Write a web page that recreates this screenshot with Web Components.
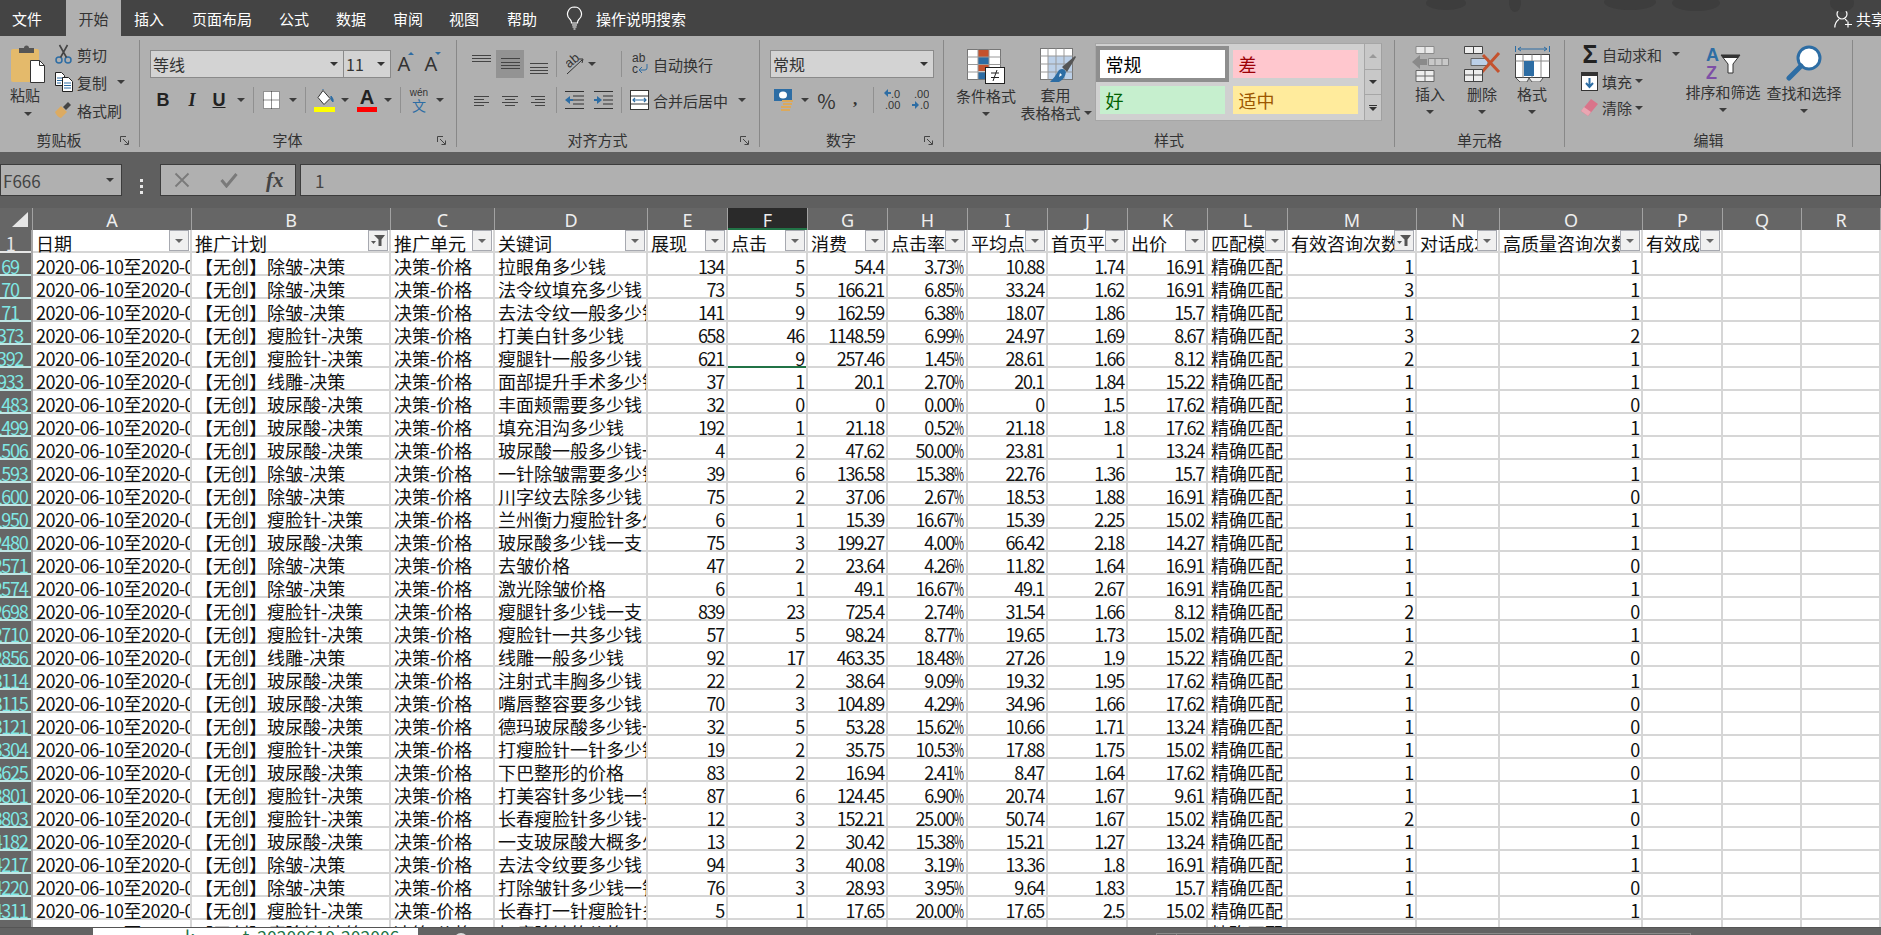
<!DOCTYPE html>
<html lang="zh"><head><meta charset="utf-8"><title>Excel</title>
<style>
html,body{margin:0;padding:0;width:1881px;height:935px;overflow:hidden;background:#5f5f5f;font-family:"Noto Sans CJK SC","Noto Sans",sans-serif}
</style></head><body><x-app></x-app>
<script>
const FF='"Noto Sans CJK SC","Noto Sans",sans-serif';
const blue='#2d6da4';
const L=(w,h,rows,c='#444')=>`<svg width="${w}" height="${h}" viewBox="0 0 ${w} ${h}"><path d="${rows.map(r=>`M${r[0]} ${r[2]}H${r[1]}`).join('')}" stroke="${c}" fill="none"/></svg>`;
const ICONS={
paste:`<svg width="34" height="39" viewBox="0 0 34 39"><rect y="5" width="28" height="33" rx="2" fill="#e4ba6b"/><path d="M8 9V4h5a2.500 2.500 0 0 1 5 0h5v5z" fill="#555"/><path d="M19.500 16.500h9l5 5v17h-14z" fill="#fff" stroke="#333"/><path d="M28.500 16.500v5h5" fill="none" stroke="#333"/></svg>`,
cut:`<svg width="17" height="20" viewBox="0 0 17 20"><circle cx="4" cy="16" r="3" fill="none" stroke="${blue}" stroke-width="1.5"/><circle cx="13" cy="16" r="3" fill="none" stroke="${blue}" stroke-width="1.5"/><path d="M5.500 13.500 12.500 1M11.500 13.500 4.500 1" stroke="#444" stroke-width="1.6" fill="none"/></svg>`,
copy:`<svg width="18" height="20" viewBox="0 0 18 20"><path d="M.5.5h6l3 3v10H.5z" fill="#fff" stroke="#222"/><path d="M2 6h6M2 8.500h6M2 11h4" stroke="${blue}"/><path d="M7.500 5.500h6l4 4v10h-10z" fill="#fff" stroke="#222"/><path d="M9 11h7M9 13.500h7M9 16h7" stroke="${blue}"/></svg>`,
brush:`<svg width="17" height="17" viewBox="0 0 17 17"><path d="M0 10 6 4l6 6-6 6Q2 15 0 10z" fill="#dcab62"/><path d="M8 5l5-5 3 3-5 5z" fill="#444"/></svg>`,
border:`<svg width="17" height="18" viewBox="0 0 17 18"><rect width="17" height="18" fill="#fff"/><path d="M.5.500h16v17H.5zM8.500.500v17M.5 9h16" fill="none" stroke="#222" stroke-dasharray="1 1"/></svg>`,
fill:`<svg width="21" height="23" viewBox="0 0 21 23"><path d="M9 1.500l7 8-6 6-6-7z" fill="#fff" stroke="#333"/><path d="M9 1V0M17 7q3 3 2 6-3-2-2-6z" stroke="${blue}" fill="${blue}"/><rect y="18" width="21" height="5" fill="#ff0"/></svg>`,
topa:L(19,28,[[0,19,5.5],[0,19,8.5],[0,19,11.5]]),
mida:L(19,28,[[0,19,8.5],[0,19,12.5],[0,19,15.5],[0,19,18.5]]),
bota:L(18,28,[[0,18,13.5],[0,18,17.5],[0,18,20.5],[0,18,23.5]]),
lefta:L(15,28,[[0,15,10.5],[0,10,13.5],[0,15,16.5],[0,10,19.5]]),
cena:L(16,28,[[0,16,10.5],[3,13,13.5],[0,16,16.5],[3,13,19.5]]),
riga:L(14,28,[[0,14,10.5],[4,14,13.5],[0,14,16.5],[4,14,19.5]]),
orient:`<svg width="18" height="22" viewBox="0 0 18 22"><text x="0" y="13" font-size="13" font-family="Liberation Sans" fill="#333" transform="rotate(-40 5 10)">ab</text><path d="M1 21 16 7M13 6l4 0-1 4" stroke="#333" fill="none"/></svg>`,
wrap:`<svg width="17" height="24" viewBox="0 0 17 24"><text x="0" y="10" font-size="12" font-family="Liberation Sans" fill="#333">ab</text><text x="0" y="21" font-size="12" font-family="Liberation Sans" fill="#333">c</text><path d="M15 12v4q0 2-2 2H8M10 15l-3 3 3 3" stroke="${blue}" fill="none"/></svg>`,
outd:`<svg width="19" height="18" viewBox="0 0 19 18"><path d="M0 .500h19M8 5h11M8 9h11M8 13h11M0 17.500h19" stroke="#333"/><path d="M0 9l5-4v3h3v2H5v3z" fill="${blue}"/></svg>`,
ind:`<svg width="19" height="18" viewBox="0 0 19 18"><path d="M0 .500h19M9 5h10M9 9h10M9 13h10M0 17.500h19" stroke="#333"/><path d="M8 9 3 5v3H0v2h3v3z" fill="${blue}"/></svg>`,
merge:`<svg width="19" height="20" viewBox="0 0 19 20"><rect x=".5" y=".5" width="18" height="19" fill="#fff" stroke="#333"/><path d="M.5 6h18M.5 14h18" stroke="#333"/><path d="M3 10h13M5 8l-2 2 2 2M14 8l2 2-2 2" stroke="${blue}" fill="none" stroke-width="1.2"/></svg>`,
acct:`<svg width="20" height="23" viewBox="0 0 20 23"><rect width="18" height="12" fill="${blue}"/><ellipse cx="9" cy="6" rx="4" ry="3.500" fill="#fff"/><path d="M8 12h11M9 15h9M7 18h10M7 21h9" stroke="#dba95c" stroke-width="2.200"/></svg>`,
inc:`<svg width="17" height="24" viewBox="0 0 17 24"><path d="M0 5l4-4v3h3v2H4v3z" fill="${blue}"/><text x="7" y="10" font-size="11" font-family="Liberation Sans" fill="#333">.0</text><text x="1" y="21" font-size="11" font-family="Liberation Sans" fill="#333">.00</text></svg>`,
dec:`<svg width="17" height="24" viewBox="0 0 17 24"><text x="2" y="10" font-size="11" font-family="Liberation Sans" fill="#333">.00</text><path d="M7 17l-4-4v3H0v2h3v3z" fill="${blue}"/><text x="8" y="21" font-size="11" font-family="Liberation Sans" fill="#333">.0</text></svg>`,
cf:`<svg width="38" height="35" viewBox="0 0 38 35"><rect x=".5" y=".5" width="33" height="30" fill="#fff" stroke="#777"/><rect x="11" y="1" width="11" height="7" fill="#c4522e"/><rect x="11" y="8" width="11" height="7" fill="${blue}"/><rect x="11" y="15" width="11" height="7" fill="#c4522e"/><rect x="11" y="23" width="11" height="7" fill="${blue}"/><path d="M11 .500v30M22 .500v30M.5 8h33M.5 15.500h33M.5 23h33" stroke="#999" fill="none"/><rect x="18.500" y="18.500" width="19" height="16" fill="#fff" stroke="#222"/><path d="M24 24h8M24 28.500h8M30 21l-4 11" stroke="#222" fill="none"/></svg>`,
tf:`<svg width="37" height="35" viewBox="0 0 37 35"><rect x=".5" y=".5" width="32" height="31" fill="#fff" stroke="#777"/><rect x="8" y="8" width="24" height="23" fill="#bcd0e8"/><path d="M8 .500v31M16 .500v31M24 .500v31M.5 8h32M.5 16h32M.5 24h32" stroke="#999" fill="none"/><path d="M22 19 35 8l1 1-9 15z" fill="#555"/><path d="M19 22q5-3 7 2-1 7-7 10h-9q5-5 9-12z" fill="${blue}"/><path d="M20 25l2 2-3 2z" fill="#fff"/></svg>`,
insert:`<svg width="37" height="36" viewBox="0 0 37 36"><path d="M4 .5h18v7H4zM13 .5v7" fill="#e8e8e8" stroke="#8a8a8a"/><path d="M16.500 12.500h20v7h-20zM23 12.500v7M30 12.500v7" fill="#c8c8c8" stroke="#8a8a8a"/><path d="M0 16l8-7v4h7v6H8v4z" fill="#8a8a8a"/><path d="M4 24.500h18v11H4zM13 24.500v11M4 30h18" fill="#eee" stroke="#666"/></svg>`,
del:`<svg width="37" height="36" viewBox="0 0 37 36"><path d="M.5.5h18v7H.5zM9.500.500v7" fill="#eee" stroke="#444"/><path d="M7 12.500h17v7H7z" fill="#bcd0e8" stroke="#666"/><path d="M18 26 35 7M19 9l16 17" stroke="#c4522e" stroke-width="3" fill="none"/><path d="M.5 23.500h18v12H.5zM9.500 23.500v12M.5 29h18" fill="#eee" stroke="#444"/></svg>`,
fmt:`<svg width="35" height="36" viewBox="0 0 35 36"><path d="M.5 0v6M34.500 0v6M3 3h29M6 1 3 3l3 2M29 1l3 2-3 2" stroke="${blue}" fill="none"/><rect x=".5" y="8.500" width="34" height="23" fill="#fff" stroke="#444"/><path d="M8 8.500v23M17 8.500v23M26 8.500v23M.5 15h34" stroke="#888" fill="none"/><rect x="9" y="15" width="10" height="15" fill="${blue}"/><path d="M1 32l4 4h7l2-4M14 32l3 4h8l3-4" fill="#eee" stroke="#555"/></svg>`,
fillb:`<svg width="17" height="19" viewBox="0 0 17 19"><rect x=".5" y=".5" width="16" height="18" fill="#fff" stroke="#333"/><rect width="17" height="4" fill="#333"/><path d="M8.500 6v8M5 11l3.500 4 3.500-4" stroke="${blue}" stroke-width="2" fill="none"/></svg>`,
erase:`<svg width="17" height="19" viewBox="0 0 17 19"><path d="M0 13 10 1l7 5L7 18z" fill="#d9748a"/><path d="M0 13l7 5 3-4-7-5z" fill="#e9a6b2"/></svg>`,
sort:`<svg width="35" height="34" viewBox="0 0 35 34"><text x="0" y="15" font-size="18" font-weight="700" font-family="Liberation Sans" fill="${blue}">A</text><text x="0" y="33" font-size="18" font-weight="700" font-family="Liberation Sans" fill="#7d4fa6">Z</text><path d="M15 9h19l-7 9v9h-5v-9z" fill="#fff" stroke="#333" stroke-width="1"/><path d="M15 9h19l-2 3H17z" fill="#333"/></svg>`,
find:`<svg width="36" height="36" viewBox="0 0 36 36"><circle cx="23" cy="13" r="11" fill="#fff" stroke="${blue}" stroke-width="3"/><path d="M15 21 3 33" stroke="${blue}" stroke-width="5" stroke-linecap="round"/></svg>`,
launch:`<svg width="9" height="9" viewBox="0 0 9 9"><path d="M.5 6V.5H6M3 3l5 5M8.500 4.500v4h-4" stroke="#444" fill="none"/></svg>`,
bulb:`<svg width="17" height="24" viewBox="0 0 17 24"><path d="M8.500 1a7 7 0 0 0-4.300 12.500c1 1 1.300 2 1.300 3.500h6c0-1.500.3-2.500 1.300-3.500A7 7 0 0 0 8.500 1zM6 19h5M6.500 21h4M7.500 23h2" stroke="#fff" stroke-width="1.200" fill="none"/></svg>`,
share:`<svg width="19" height="20" viewBox="0 0 19 20"><circle cx="8" cy="6" r="5" fill="none" stroke="#fff" stroke-width="1.200"/><path d="M.8 19.500c0-4 1.700-6.500 4.200-8.200M11 11.300c1 .6 1.700 1.200 2.300 2M14 13.500v6M11 16.500h7" stroke="#fff" stroke-width="1.200" fill="none"/></svg>`,
x:`<svg width="16" height="16" viewBox="0 0 16 16"><path d="M1.500 1.500 14.500 14.500M14.500 1.500 1.500 14.500" stroke="#7a7a7a" stroke-width="1.800"/></svg>`,
check:`<svg width="18" height="16" viewBox="0 0 18 16"><path d="M1.500 8 6.500 14 16.500 2" stroke="#7a7a7a" stroke-width="3" fill="none"/></svg>`
};
customElements.define('x-icon',class extends HTMLElement{
  connectedCallback(){if(this.shadowRoot)return;this.attachShadow({mode:'open'}).innerHTML=`<style>:host{display:inline-flex;line-height:0}</style>${ICONS[this.getAttribute('n')]}`;}
});
const ic=n=>`<x-icon n="${n}"></x-icon>`;
const AR=`<i class="ar"></i>`;
const SEP=`<i class="sep"></i>`;
/* flow helper: items are laid out in a flex row, the spacing comes from the gaps between their x */
function P(x0,items){let c=x0,o='';for(const [x,w,h,cl] of items){o+=`<div class="it ${cl||''}" style="margin-left:${x-c}px;width:${w}px">${h}</div>`;c=x+w;}return o;}
const R=(mt,h,inner,cl='')=>`<div class="r ${cl}" style="margin-top:${mt}px;height:${h}px">${inner}</div>`;
const bigBtn=(iconH,mt,n,t,t2)=>`<div class="big"><div style="margin-top:${mt}px;height:${iconH}px;line-height:0">${ic(n)}</div><div class="lb">${t}</div>${t2?`<div class="lb2">${t2}</div>`:`<div class="ara">${AR}</div>`}</div>`;
customElements.define('x-group',class extends HTMLElement{
  constructor(){super();this.attachShadow({mode:'open'}).innerHTML=`<style>
  :host{display:flex;flex-direction:column;flex:none;box-sizing:border-box;height:107px;margin:4px 0 5px;border-right:1px solid #888;font:15px ${FF};color:#333}
  .c{height:93px}
  .f{height:14px;display:flex;align-items:center}
  .l{flex:1;text-align:center;white-space:nowrap;line-height:14px}
  .k{width:21px;display:flex;justify-content:flex-start;padding-left:2px;box-sizing:border-box}
  </style><div class="c"><slot></slot></div><div class="f"><div class="l"></div><div class="k"></div></div>`;}
  connectedCallback(){const s=this.shadowRoot;s.querySelector('.l').textContent=this.getAttribute('label')||'';
    if(this.hasAttribute('launch')){s.querySelector('.k').innerHTML=ic('launch');}else s.querySelector('.k').remove();
    this.style.width=this.getAttribute('w')+'px';}
});
customElements.define('x-combo',class extends HTMLElement{
  constructor(){super();this.attachShadow({mode:'open'}).innerHTML=`<style>
  :host{display:flex;flex:1;height:28px;box-sizing:border-box;border:1.5px solid #8a8a8a;background:#d3d3d3;font:16px ${FF};color:#333;align-items:center}
  .p{flex:1;display:flex;align-items:center;height:100%;padding:0 0 0 2px;min-width:0}
  .p span{flex:1}
  i{width:0;height:0;border:4px solid transparent;border-top:4px solid #333;border-bottom:0;margin-right:5px}
  .d{border-left:1.5px solid #8a8a8a}
  </style><div class="p"><span></span><i></i></div>`;}
  connectedCallback(){const p=this.shadowRoot.querySelector('.p');p.querySelector('span').textContent=this.getAttribute('v');
    if(this.hasAttribute('v2')){const q=p.cloneNode(true);q.classList.add('d');q.style.flex='none';q.style.width='44px';q.querySelector('span').textContent=this.getAttribute('v2');p.after(q);}}
});
customElements.define('x-tabs',class extends HTMLElement{
  constructor(){super();const tabs=[[12,30,'文件'],[66,55,'开始','on'],[134,30,'插入'],[192,60,'页面布局'],[279,30,'公式'],[336,30,'数据'],[393,30,'审阅'],[449,30,'视图'],[507,30,'帮助'],[566,17,ic('bulb')],[596,90,'操作说明搜索']];
  this.attachShadow({mode:'open'}).innerHTML=`<style>
  :host{display:flex;flex:none;height:36px;background:#444;color:#fff;font:15px ${FF};position:relative;overflow:hidden}
  .it{flex:none;display:flex;align-items:center;justify-content:center;white-space:nowrap;height:36px}
  .on{background:#b0b0b0;color:#333}
  svg.bg{position:absolute;left:0;top:0}
  </style><svg class="bg" width="1881" height="14"><g fill="#3d3d3d"><ellipse cx="1446" cy="3" rx="20" ry="7"/><ellipse cx="1515" cy="3" rx="6" ry="9"/><ellipse cx="1630" cy="2" rx="26" ry="8"/><ellipse cx="1696" cy="3" rx="24" ry="8"/><ellipse cx="1842" cy="3" rx="12" ry="9"/></g></svg>
  ${P(0,tabs.map(t=>[t[0],t[1],t[2],t[3]]))}${P(686,[[1834,19,ic('share')],[1856,30,'共享']])}`;}
});
customElements.define('x-ribbon',class extends HTMLElement{
  constructor(){super();
  const g1=R(0,93,P(0,[[8,40,`<div class="big"><div style="margin-top:4px;height:39px;line-height:0">${ic('paste')}</div><div class="lb" style="height:22px;margin-right:6px">粘贴</div><div style="margin-top:7px;display:flex">${AR}</div></div>`],
    [55,85,`<div class="col">`+
      R(0,28,P(55,[[55,17,ic('cut')],[77,30,'剪切']]))+
      R(0,28,P(55,[[55,18,ic('copy')],[77,30,'复制'],[117,8,AR]]))+
      R(0,28,P(55,[[55,17,ic('brush')],[77,45,'格式刷']]))+`</div>`]]),'top');
  const g2=R(10,28,P(140,[[150,241,`<x-combo v="等线" v2="11"></x-combo>`],[395,22,`<span class="aa">A<i class="tu"></i></span>`],[422,22,`<span class="aa">A<i class="td"></i></span>`]]))+
    R(8,28,P(140,[[155,16,'<b class="bi">B</b>'],[184,16,'<b class="bi" style="font-style:italic;font-family:\'Liberation Serif\'">I</b>'],[211,16,'<b class="bi" style="text-decoration:underline">U</b>'],[237,8,AR],[253,1,SEP],[263,17,ic('border')],[289,8,AR],[305,1,SEP],[314,21,ic('fill')],[341,8,AR],[357,20,`<div class="fc"><b>A</b><i></i></div>`],[384,8,AR],[400,1,SEP],[410,18,`<div class="wen"><span>wén</span><span>文</span></div>`],[436,8,AR]]));
  const g3=R(10,28,P(457,[[472,19,ic('topa')],[496,28,ic('mida'),'hi'],[530,18,ic('bota')],[556,1,SEP],[566,18,ic('orient')],[588,8,AR],[621,1,SEP],[632,17,ic('wrap')],[653,60,'自动换行']]))+
    R(8,28,P(457,[[474,15,ic('lefta')],[502,16,ic('cena')],[531,14,ic('riga')],[556,1,SEP],[565,19,ic('outd')],[594,19,ic('ind')],[621,1,SEP],[630,19,ic('merge')],[653,75,'合并后居中'],[738,8,AR]]));
  const g4=R(10,28,P(760,[[770,164,`<x-combo v="常规"></x-combo>`]]))+
    R(8,28,P(760,[[774,20,ic('acct')],[801,8,AR],[818,17,'<span style="font-size:20px">%</span>'],[850,10,'<b style="font:700 17px \'Liberation Serif\'">,</b>'],[873,1,SEP],[884,17,ic('inc')],[912,17,ic('dec')]]));
  const gal=`<div class="gal"><div class="cells"><div class="st" style="background:#fff;color:#000;box-shadow:0 0 0 4px #8e8e8e">常规</div><div class="st" style="background:#ffc7ce;color:#9c0006">差</div><div class="st" style="background:#c6efce;color:#006100">好</div><div class="st" style="background:#ffeb9c;color:#9c5700">适中</div></div>
   <div class="scr"><div><i class="up"></i></div><div><i class="dn"></i></div><div><i class="dn"></i><u></u></div></div></div>`;
  const g5=R(0,93,P(944,[[950,72,bigBtn(35,9,'cf','条件格式')],[1024,68,`<div class="big"><div style="margin-top:8px;height:35px;line-height:0">${ic('tf')}</div><div class="lb" style="margin-right:5px">套用</div><div class="lb2" style="margin-left:-4px">表格格式<span style="margin-left:3px;display:flex">${AR}</span></div></div>`],[1095,286,gal]]),'top');
  const g6=R(0,93,P(1395,[[1405,50,bigBtn(36,6,'insert','插入')],[1457,50,bigBtn(36,6,'del','删除')],[1507,50,bigBtn(36,6,'fmt','格式')]]),'top');
  const g7=R(0,93,P(1565,[[1580,100,`<div class="col">`+
      R(0,28,P(1580,[[1581,18,'<b style="font:700 25px \'Liberation Sans\';color:#222">Σ</b>'],[1602,60,'自动求和'],[1672,8,AR]]))+
      R(0,26,P(1580,[[1580,18,ic('fillb')],[1602,30,'填充'],[1635,8,AR]]))+
      R(0,27,P(1580,[[1580,18,ic('erase')],[1602,30,'清除'],[1635,8,AR]]))+`</div>`],
    [1685,76,bigBtn(34,6,'sort','排序和筛选')],[1766,76,bigBtn(36,5,'find','查找和选择')]]),'top');
  this.attachShadow({mode:'open'}).innerHTML=`<style>
  :host{display:flex;flex:none;height:116px;background:#b0b0b0;color:#333;font:15px ${FF};box-sizing:border-box}
  .r{display:flex;align-items:center}
  .r.top{align-items:flex-start}
  .it{flex:none;display:flex;align-items:center;justify-content:center;white-space:nowrap;height:100%}
  .top>.it{height:auto}
  .col{display:flex;flex-direction:column;width:100%}
  .big{display:flex;flex-direction:column;align-items:center;width:100%}
  .lb{height:24px;line-height:24px;flex:none}
  .lb2{display:flex;align-items:center;height:12px;line-height:12px;margin-top:0}
  .ara{margin-top:4px;display:flex}
  .ar{display:block;width:0;height:0;border:4px solid transparent;border-top:4px solid #3c3c3c;border-bottom:0}
  .sep{display:block;width:1px;height:26px;background:#909090}
  .hi{background:#939393}
  .bi{font:700 18px "Liberation Sans";color:#222}
  .aa{font:20px "Noto Sans",sans-serif;color:#333;display:flex;align-items:flex-start;line-height:24px}
  .tu,.td{display:block;width:0;height:0;border:3px solid transparent;margin-left:-2px}
  .tu{border-bottom:3px solid ${blue};border-top:0}.td{border-top:3px solid ${blue};border-bottom:0}
  .fc{display:flex;flex-direction:column;align-items:center;width:20px}
  .fc b{font:700 20px/19px "Liberation Sans";color:#222}.fc i{width:20px;height:5px;background:#f00}
  .wen{display:flex;flex-direction:column;align-items:center;line-height:12px}
  .wen span:first-child{font:10px/10px "Liberation Sans";color:#333}.wen span:last-child{font-size:14px;line-height:15px;color:${blue}}
  .gal{display:flex;margin-top:3px;height:78px;width:287px;box-sizing:border-box;background:#d0d0d0;border:1px solid #a6a6a6;border-right:1px solid #a0a0a0;padding-left:4px}
  .cells{display:grid;grid-template-columns:125px 125px;grid-auto-rows:28px;gap:8px;padding-top:6px}
  .st{font:18px/28px ${FF};padding-left:6px;box-sizing:border-box;white-space:nowrap}
  .scr{margin-left:6px;width:19px;display:flex;flex-direction:column;border-left:1px solid #a6a6a6;box-sizing:border-box}
  .scr div{flex:1;display:flex;flex-direction:column;align-items:center;justify-content:center;border-bottom:1px solid #a6a6a6;background:#c8c8c8}
  .scr div:last-child{border-bottom:0}
  .scr i{display:block;width:0;height:0;border:4px solid transparent}
  .scr .up{border-bottom:4px solid #999;border-top:0}.scr .dn{border-top:4px solid #333;border-bottom:0}
  .scr u{display:block;width:8px;border-top:1px solid #333;margin-top:1px;order:-1;margin-bottom:1px}
  </style>
  <x-group label="剪贴板" launch w="140">${g1}</x-group>
  <x-group label="字体" launch w="317">${g2}</x-group>
  <x-group label="对齐方式" launch w="303">${g3}</x-group>
  <x-group label="数字" launch w="184">${g4}</x-group>
  <x-group label="样式" w="451">${g5}</x-group>
  <x-group label="单元格" w="170">${g6}</x-group>
  <x-group label="编辑" w="288">${g7}</x-group>`;}
});
customElements.define('x-formula',class extends HTMLElement{
  constructor(){super();this.attachShadow({mode:'open'}).innerHTML=`<style>
  :host{display:flex;flex:none;height:56px;box-sizing:border-box;padding-top:12px;background:#5f5f5f;font:17px ${FF};color:#444}
  .box{height:32px;box-sizing:border-box;border:1px solid #3c3c3c;background:#b0b0b0;display:flex;align-items:center;flex:none}
  .name{width:122px;padding-left:2px;justify-content:space-between;padding-right:7px}
  .ar{width:0;height:0;border:4px solid transparent;border-top:4px solid #3c3c3c;border-bottom:0}
  .dots{width:38px;flex:none;display:flex;flex-direction:column;align-items:center;justify-content:center;gap:3px}
  .dots i{width:3px;height:3px;background:#e8e8e8}
  .fx{width:136px;padding-left:13px;gap:30px}
  .fx b{font:italic 700 21px "Liberation Serif";color:#444;margin-left:-2px}
  .in{margin-left:4px;flex:1;padding-left:14px;color:#444}
  </style><div class="box name"><span>F666</span><i class="ar"></i></div><div class="dots"><i></i><i></i><i></i></div>
  <div class="box fx">${ic('x')}${ic('check')}<b>fx</b></div><div class="box in">1</div>`;}
});
const COLS=[33,159,199,104,153,80,80,80,80,80,80,80,80,129,83,143,80,79,79];
const GT=COLS.map(c=>c+'px').join(' ');
customElements.define('x-colhead',class extends HTMLElement{
  constructor(){super();const L='ABCDEFGHIJKLMNOPQR'.split('');this.attachShadow({mode:'open'}).innerHTML=`<style>
  :host{display:grid;flex:none;grid-template-columns:${GT};height:22px;background:#666;color:#eee;font:18px/22px "Noto Sans",sans-serif}
  div{text-align:center;border-right:1px solid #a2a2a2;box-sizing:border-box;height:22px;line-height:24px;overflow:hidden}
  .on{background:#2a2a2a;box-shadow:inset 0 -2px #217346}
  .cn{display:flex;align-items:center;justify-content:flex-end;padding:0 4px 0 0}
  .cn i{width:0;height:0;border-style:solid;border-width:0 0 15px 16px;border-color:transparent transparent #e6e6e6 transparent}
  </style><div class="cn"><i></i></div>${L.map(c=>`<div class="${c=='F'?'on':''}">${c}</div>`).join('')}`;}
});
const cellCss=`:host{display:grid;flex:none;grid-template-columns:${GT};height:23px;background:#fff;color:#111;font:18px/23px ${FF}}
  .c{box-sizing:border-box;height:23px;border-right:2px solid #d6d6d6;box-shadow:inset 0 -2px #d6d6d6;overflow:hidden;white-space:nowrap;padding:0 0 0 3px;line-height:26px;min-width:0}
  .d{letter-spacing:-.5px}
  .rh{background:#666;color:#7fe8e4;padding:0 11px 0 0;display:flex;justify-content:center;border-right:2px solid #a8a8a8;box-shadow:inset 0 -2px #bfe6e4;letter-spacing:-1.3px}
  .rh span{flex:none}
  .n{text-align:right;padding:0 2px 0 0;letter-spacing:-1.3px}
  .p{display:inline-block;width:10px;transform:scaleX(.6);transform-origin:left;letter-spacing:0;text-align:left}
  .act{box-shadow:inset 0 -2px #217346}`;
customElements.define('x-headrow',class extends HTMLElement{
  constructor(){super();const H=['日期','推广计划','推广单元','关键词','展现','点击','消费','点击率','平均点','首页平','出价','匹配模','有效咨询次数','对话成本','高质量咨询次数','有效成'];
  const F=new Set([1,12]);
  const btn=f=>`<span class="b">${f?`<svg width="14" height="13" viewBox="0 0 14 13"><path d="M3 1h11L10.500 5.500V12H7.500V5.500z" fill="#555"/><path d="M0 7h5L2.500 10z" fill="#555"/></svg>`:`<i></i>`}</span>`;
  this.attachShadow({mode:'open'}).innerHTML=`<style>${cellCss}
  .h{display:flex;padding:0 1px 0 3px;align-items:stretch}
  .t{flex:1;min-width:0;overflow:hidden;line-height:26px}
  .b{flex:none;width:20px;height:21px;margin-top:0;box-sizing:border-box;background:#f0f0f0;border:1.5px solid #a7a9b0;display:flex;align-items:center;justify-content:center}
  .b i{width:0;height:0;border:4px solid transparent;border-top:4px solid #666;border-bottom:0}
  .rh{color:#e6e6e6;box-shadow:inset 0 -2px #e6e6e6}
  </style><div class="c rh"><span>1</span></div>${H.map((t,i)=>`<div class="c h"><span class="t">${t}</span>${btn(F.has(i))}</div>`).join('')}<div class="c"></div><div class="c"></div>`;}
});
customElements.define('x-row',class extends HTMLElement{
  connectedCallback(){if(this.shadowRoot)return;
    const PL={z:'除皱',s:'瘦脸针',x:'线雕',b:'玻尿酸'};
    const d=this.getAttribute('d').split('|');
    const [rn,pl,kw,...nums]=d;
    const num=v=>v.endsWith('%')?`${v.slice(0,-1)}<span class="p">%</span>`:v;
    const cells=nums.slice(0,7).map((v,i)=>`<div class="c n${i==1&&this.hasAttribute('act')?' act':''}">${num(v)}</div>`).join('');
    this.attachShadow({mode:'open'}).innerHTML=`<style>${cellCss}</style><div class="c rh"><span>${rn}</span></div><div class="c d">2020-06-10至2020-06-16</div><div class="c">【无创】${PL[pl]}-决策</div><div class="c">决策-价格</div><div class="c">${kw}</div>${cells}<div class="c">精确匹配</div><div class="c n">${nums[7]}</div><div class="c"></div><div class="c n">${nums[8]}</div><div class="c"></div><div class="c"></div><div class="c"></div>`;}
});
const DATA=`69|z|拉眼角多少钱|134|5|54.4|3.73%|10.88|1.74|16.91|1|1
70|z|法令纹填充多少钱|73|5|166.21|6.85%|33.24|1.62|16.91|3|1
71|z|去法令纹一般多少钱|141|9|162.59|6.38%|18.07|1.86|15.7|1|1
373|s|打美白针多少钱|658|46|1148.59|6.99%|24.97|1.69|8.67|3|2
392|s|瘦腿针一般多少钱|621|9|257.46|1.45%|28.61|1.66|8.12|2|1
933|x|面部提升手术多少钱|37|1|20.1|2.70%|20.1|1.84|15.22|1|1
1483|b|丰面颊需要多少钱|32|0|0|0.00%|0|1.5|17.62|1|0
1499|b|填充泪沟多少钱|192|1|21.18|0.52%|21.18|1.8|17.62|1|1
1506|b|玻尿酸一般多少钱一|4|2|47.62|50.00%|23.81|1|13.24|1|1
1593|z|一针除皱需要多少钱|39|6|136.58|15.38%|22.76|1.36|15.7|1|1
1600|z|川字纹去除多少钱|75|2|37.06|2.67%|18.53|1.88|16.91|1|0
1950|s|兰州衡力瘦脸针多少钱|6|1|15.39|16.67%|15.39|2.25|15.02|1|1
2480|b|玻尿酸多少钱一支|75|3|199.27|4.00%|66.42|2.18|14.27|1|1
2571|z|去皱价格|47|2|23.64|4.26%|11.82|1.64|16.91|1|0
2574|z|激光除皱价格|6|1|49.1|16.67%|49.1|2.67|16.91|1|1
2698|s|瘦腿针多少钱一支|839|23|725.4|2.74%|31.54|1.66|8.12|2|0
2710|s|瘦脸针一共多少钱|57|5|98.24|8.77%|19.65|1.73|15.02|1|1
2856|x|线雕一般多少钱|92|17|463.35|18.48%|27.26|1.9|15.22|2|0
3114|b|注射式丰胸多少钱|22|2|38.64|9.09%|19.32|1.95|17.62|1|1
3115|b|嘴唇整容要多少钱|70|3|104.89|4.29%|34.96|1.66|17.62|1|0
3121|b|德玛玻尿酸多少钱一|32|5|53.28|15.62%|10.66|1.71|13.24|1|0
3304|s|打瘦脸针一针多少钱|19|2|35.75|10.53%|17.88|1.75|15.02|1|0
3625|b|下巴整形的价格|83|2|16.94|2.41%|8.47|1.64|17.62|1|0
3801|s|打美容针多少钱一针|87|6|124.45|6.90%|20.74|1.67|9.61|1|1
3803|s|长春瘦脸针多少钱一|12|3|152.21|25.00%|50.74|1.67|15.02|2|0
4182|b|一支玻尿酸大概多少|13|2|30.42|15.38%|15.21|1.27|13.24|1|1
4217|z|去法令纹要多少钱|94|3|40.08|3.19%|13.36|1.8|16.91|1|1
4220|z|打除皱针多少钱一针|76|3|28.93|3.95%|9.64|1.83|15.7|1|0
4311|s|长春打一针瘦脸针多|5|1|17.65|20.00%|17.65|2.5|15.02|1|1
4316|s|打瘦脸针的价格一|85|2|164.10|12.50%|14.6|1.8|15.02|1|1`.split('\n');
customElements.define('x-sheet',class extends HTMLElement{
  constructor(){super();this.attachShadow({mode:'open'}).innerHTML=`<style>:host{display:flex;flex-direction:column;flex:1;min-height:0;overflow:hidden;background:#fff}</style>
  <x-colhead></x-colhead><x-headrow></x-headrow>${DATA.map((d,i)=>`<x-row d="${d}"${i==4?' act':''}></x-row>`).join('')}`;}
});
customElements.define('x-sheetbar',class extends HTMLElement{
  constructor(){super();this.attachShadow({mode:'open'}).innerHTML=`<style>
  :host{display:flex;flex:none;height:8px;background:#636363;border-top:1px solid #555;box-sizing:border-box;overflow:hidden;font:17.5px/18px ${FF};color:#217346}
  .tab{flex:none;width:325px;margin-left:93px;background:#fff;display:flex;white-space:nowrap}
  .tab span{flex:none}
  .add{flex:none;width:14px;height:14px;border-radius:50%;background:#ddd;margin:5px 0 0 36px}
  .sb{flex:none;width:535px;margin:5px 0 0 688px;border:1px solid #8a8a8a;border-bottom:0;height:6px;box-sizing:border-box;display:flex}
  .sb i{width:19px;border-right:1px solid #8a8a8a}
  </style><div class="tab"><span style="margin-left:92px">k</span><span style="margin-left:48px">t</span><span style="margin-left:8px">20200610-202006</span></div><div class="add"></div><div class="sb"><i></i></div>`;}
});
customElements.define('x-app',class extends HTMLElement{
  constructor(){super();this.attachShadow({mode:'open'}).innerHTML=`<style>:host{display:flex;flex-direction:column;width:1881px;height:935px;overflow:hidden}</style>
  <x-tabs></x-tabs><x-ribbon></x-ribbon><x-formula></x-formula><x-sheet></x-sheet><x-sheetbar></x-sheetbar>`;}
});
</script></body></html>
